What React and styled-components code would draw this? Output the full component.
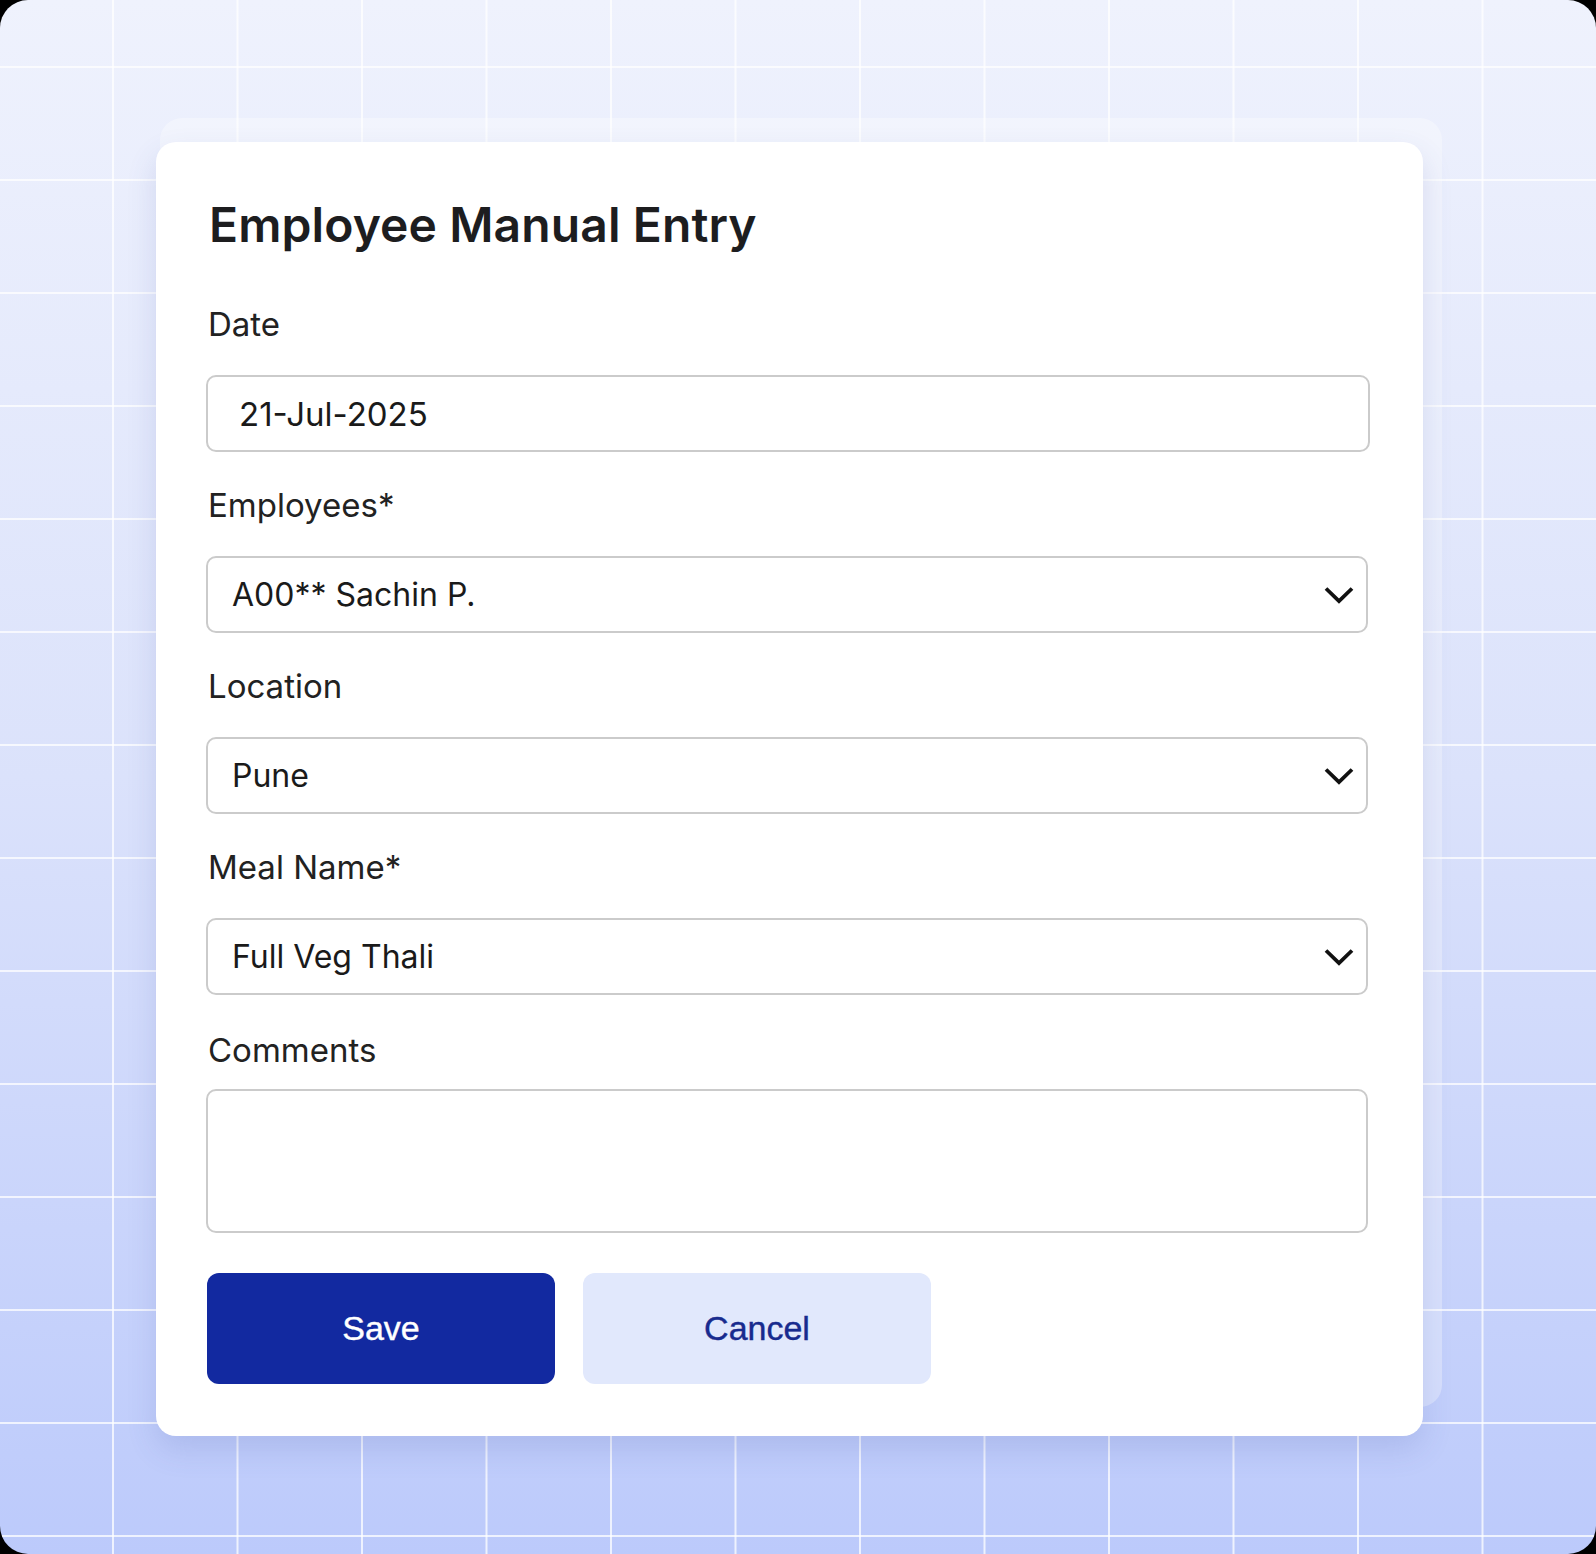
import React from "react";
import styled, { createGlobalStyle } from "styled-components";

const GlobalStyle = createGlobalStyle`
  * {
    box-sizing: border-box;
  }
  body {
    margin: 0;
    background: #000;
    font-family: "Inter", "Liberation Sans", sans-serif;
  }
`;

const Chevron = () => (
  <svg width="30" height="18" viewBox="0 0 30 18" fill="none">
    <polyline
      points="2,2.5 15,15 28,2.5"
      stroke="#111"
      strokeWidth="3.8"
      strokeLinejoin="miter"
      fill="none"
    />
  </svg>
);

const SelectField = ({ value, options }) => (
  <SelectWrap>
    <Select defaultValue={value}>
      {options.map(opt => (
        <option key={opt}>{opt}</option>
      ))}
    </Select>
    <ChevronBox>
      <Chevron />
    </ChevronBox>
  </SelectWrap>
);

const App = () => {
  return (
    <>
      <GlobalStyle />
      <Frame>
        <Card>
          <Title>Employee Manual Entry</Title>
          <Form>
            <Field>
              <Label>Date</Label>
              <DateInput type="text" defaultValue="21-Jul-2025" readOnly />
            </Field>
            <Field>
              <Label>Employees*</Label>
              <SelectField
                value="A00** Sachin P."
                options={["A00** Sachin P.", "A01** Rahul K.", "A02** Neha S."]}
              />
            </Field>
            <Field>
              <Label>Location</Label>
              <SelectField value="Pune" options={["Pune", "Mumbai", "Bengaluru"]} />
            </Field>
            <Field>
              <Label>Meal Name*</Label>
              <SelectField
                value="Full Veg Thali"
                options={["Full Veg Thali", "Mini Thali", "Non Veg Thali"]}
              />
            </Field>
            <Field $tight $offset="2px">
              <Label>Comments</Label>
              <Comments />
            </Field>
          </Form>
          <Actions>
            <Button $primary>Save</Button>
            <Button>Cancel</Button>
          </Actions>
        </Card>
      </Frame>
    </>
  );
};

export default App;

// 배경 (그리드 + 그라데이션)
const Frame = styled.div`
  position: relative;
  isolation: isolate;
  width: 1596px;
  height: 1554px;
  border-radius: 28px;
  overflow: hidden;
  padding: 142px 0 0 156px;
  background-color: #d6def9;
  background-image: linear-gradient(
      to right,
      rgba(255, 255, 255, 0.75) 0,
      rgba(255, 255, 255, 0.75) 2px,
      transparent 2px
    ),
    linear-gradient(
      to bottom,
      rgba(255, 255, 255, 0.75) 0,
      rgba(255, 255, 255, 0.75) 2px,
      transparent 2px
    ),
    linear-gradient(to bottom, #eff2fd 0%, #dbe2fb 50%, #bccafb 100%);
  background-size: 124.5px 100%, 100% 113px, 100% 100%;
  background-position: 112px 0, 0 66px, 0 0;
  background-repeat: repeat-x, repeat-y, no-repeat;
`;

// 흰 카드
const Card = styled.div`
  position: relative;
  width: 1267px;
  padding: 54px 55px 52px 50px;
  background: #fff;
  border-radius: 20px;
  box-shadow: 0 14px 30px rgba(70, 90, 170, 0.16);

  &::before {
    content: "";
    position: absolute;
    top: -24px;
    left: 4px;
    right: -19px;
    bottom: 29px;
    border-radius: 22px;
    background: rgba(255, 255, 255, 0.32);
    z-index: -1;
  }
`;

const Title = styled.h1`
  margin: 0 0 51px;
  padding-left: 3px;
  font-family: "Inter", sans-serif;
  font-weight: 600;
  font-size: 48px;
  line-height: 58px;
  letter-spacing: 0.1px;
  color: #1d1d1f;
`;

const Form = styled.div`
  display: flex;
  flex-direction: column;
  gap: 34px;
`;

const Field = styled.div`
  display: flex;
  flex-direction: column;
  gap: ${props => (props.$tight ? "20px" : "32px")};
  margin-top: ${props => props.$offset || "0"};
`;

const Label = styled.label`
  padding-left: 2px;
  font-family: "Inter", sans-serif;
  font-size: 33px;
  line-height: 38px;
  font-weight: 400;
  color: #222;
`;

const boxStyle = `
  width: 100%;
  height: 77px;
  border: 2px solid #cbcbcb;
  border-radius: 10px;
  background: #fff;
  font-family: "Inter", sans-serif;
  font-size: 32px;
  color: #1a1a1a;
  outline: none;
`;

const DateInput = styled.input`
  ${boxStyle}
  width: calc(100% + 2px);
  font-size: 33px;
  padding: 0 31px;
`;

const SelectWrap = styled.div`
  position: relative;
`;

const Select = styled.select`
  ${boxStyle}
  appearance: none;
  -webkit-appearance: none;
  padding: 0 60px 0 24px;
`;

const ChevronBox = styled.span`
  position: absolute;
  right: 14px;
  top: 50%;
  transform: translateY(-50%);
  display: flex;
  pointer-events: none;
`;

const Comments = styled.textarea`
  ${boxStyle}
  height: 144px;
  resize: none;
  padding: 20px 25px;
`;

const Actions = styled.div`
  display: flex;
  gap: 28px;
  margin-top: 40px;
  padding-left: 1px;
`;

const Button = styled.button`
  width: 348px;
  height: 111px;
  border: none;
  border-radius: 12px;
  background: ${props => (props.$primary ? "#1229a0" : "#e1e8fc")};
  color: ${props => (props.$primary ? "#fff" : "#182b8e")};
  font-family: "Liberation Sans", "Roboto", sans-serif;
  font-weight: 400;
  font-size: 34px;
  -webkit-text-stroke: 0.4px currentColor;
  cursor: pointer;
`;
